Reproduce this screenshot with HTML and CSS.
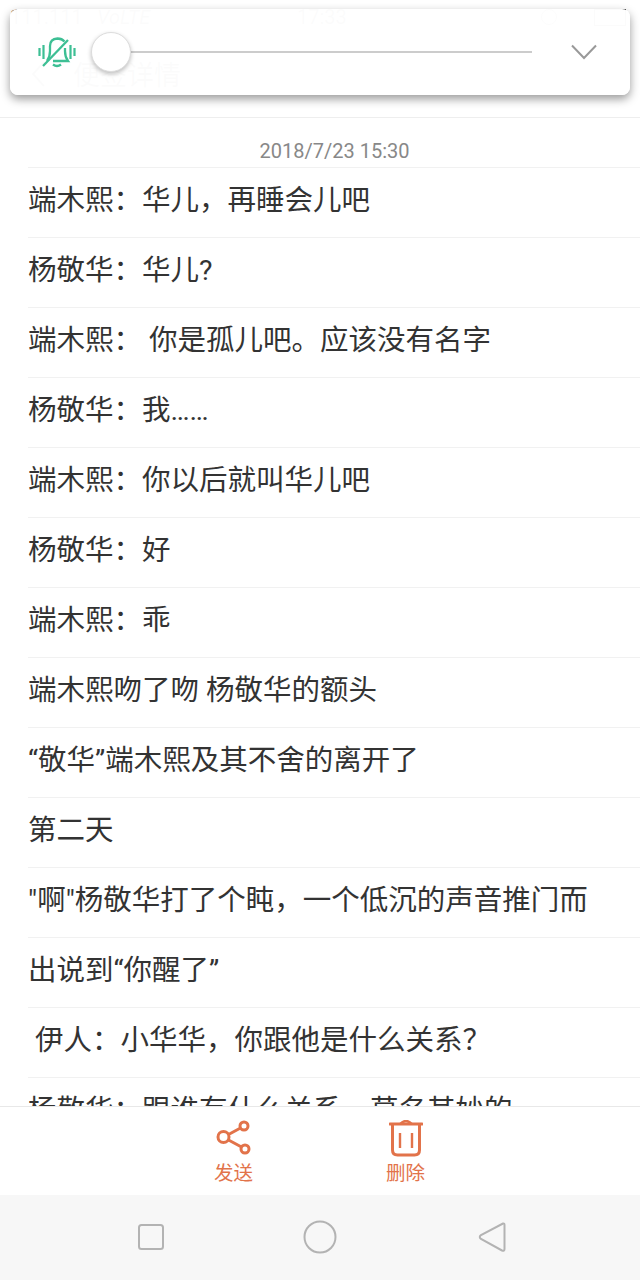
FILE: index.html
```html
<!DOCTYPE html>
<html>
<head>
  <meta charset="utf-8">
  <title>便签详情</title>
  <link rel="stylesheet" href="styles.css">
</head>
<body>
  <div class="page">
    <div class="statusbar">
      <span class="signal">111.111</span>
      <span class="net">VoLTE</span>
      <span class="clock">17:33</span>
      <span class="status-icon"></span>
      <span class="battery"></span>
    </div>
    <div class="titlebar">
      <svg class="back" width="16" height="28" viewBox="0 0 16 28"><path d="M14 2 L3 14 L14 26" fill="none" stroke="#333" stroke-width="2"/></svg>
      <span class="title">便签详情</span>
    </div>

    <div class="date">2018/7/23 15:30</div>
    <ul class="lines">
      <li>端木熙：华儿，再睡会儿吧</li>
      <li>杨敬华：华儿?</li>
      <li>端木熙：&nbsp;你是孤儿吧。应该没有名字</li>
      <li>杨敬华：我……</li>
      <li>端木熙：你以后就叫华儿吧</li>
      <li>杨敬华：好</li>
      <li>端木熙：乖</li>
      <li>端木熙吻了吻 杨敬华的额头</li>
      <li>“敬华”端木熙及其不舍的离开了</li>
      <li>第二天</li>
      <li>"啊"杨敬华打了个盹，一个低沉的声音推门而</li>
      <li>出说到“你醒了”</li>
      <li>&nbsp;伊人：小华华，你跟他是什么关系？</li>
      <li>杨敬华：跟谁有什么关系，莫名其妙的</li>
    </ul>

    <div class="actions">
      <div class="action">
        <svg width="38" height="38" viewBox="0 0 38 38" fill="none" stroke="#e2734a" stroke-width="3">
          <circle cx="8.500" cy="17" r="5.500"/>
          <circle cx="29" cy="6" r="4"/>
          <circle cx="30" cy="29" r="4"/>
          <path d="M13.500 14.500 L25.500 8 M13.500 20 L26.500 27"/>
        </svg>
        <span>发送</span>
      </div>
      <div class="action">
        <svg width="34" height="38" viewBox="0 0 34 38" fill="none" stroke="#e2734a" stroke-width="3">
          <path d="M1 4 H33" stroke-linecap="round"/>
          <path d="M11 4 Q17 -2 23 4" stroke-width="2.400"/>
          <path d="M3.500 5 V30 Q3.500 35 8.500 35 H25.500 Q30.500 35 30.500 30 V5"/>
          <path d="M11 13 V28 M23 13 V28" stroke-width="2.400"/>
        </svg>
        <span>删除</span>
      </div>
    </div>

    <div class="navbar">
      <svg width="28" height="28" viewBox="0 0 28 28"><rect x="2" y="2" width="24" height="24" rx="2.500" fill="none" stroke="#b3b3b3" stroke-width="2"/></svg>
      <svg width="34" height="34" viewBox="0 0 34 34"><circle cx="17" cy="17" r="15.500" fill="none" stroke="#b3b3b3" stroke-width="2"/></svg>
      <svg class="nav-back" width="28" height="32" viewBox="0 0 28 32"><path d="M25 2.500 Q26.500 2 26.500 4 V28 Q26.500 30.500 24 29.500 L3 18 Q0.500 16 3 14 Z" fill="none" stroke="#b3b3b3" stroke-width="2"/></svg>
    </div>

    <div class="volume">
      <svg class="bell" width="38" height="31" viewBox="0 0 38 31" fill="none" stroke="#3dbf94" stroke-width="2.300">
        <path d="M9 24 Q12 20 12 14 V9 Q12 2 19.500 1.500 Q24 1.500 26.500 4.500 M27 11 V14 Q27 20 30 24 H15"/>
        <path d="M15 27.500 Q19 30.500 23 27.500"/>
        <path d="M1.500 11 V19 M5.500 8 V22 M32.500 8 V22 M36.500 11 V19" stroke-width="2.200"/>
        <path d="M5 29 L30 3"/>
      </svg>
      <div class="slider">
        <div class="track"></div>
        <div class="knob"></div>
      </div>
      <svg class="chevron" width="26" height="16" viewBox="0 0 26 16"><path d="M1 1.500 L13 14 L25 1.500" fill="none" stroke="#999" stroke-width="2"/></svg>
    </div>
  </div>
</body>
</html>
```

FILE: styles.css
```css
* {
  box-sizing: border-box;
}
body {
  margin: 0;
  background: #fff;
  font-family: Roboto, "Noto Sans CJK SC", sans-serif;
}
.page {
  position: relative;
  width: 640px;
  height: 1280px;
  display: flex;
  flex-direction: column;
  overflow: hidden;
}
.statusbar {
  height: 36px;
  padding: 0 12px 2px 10px;
  display: flex;
  align-items: center;
  font-size: 20px;
  color: #333;
}
.signal {
  width: 87px;
}
.net {
  width: 200px;
  font-style: italic;
}
.clock {
  width: 244px;
}
.status-icon {
  width: 16px;
  height: 16px;
  margin-right: 37px;
  border: 1px solid #333;
  border-radius: 50%;
}
.battery {
  width: 32px;
  height: 17px;
  border: 1px solid #333;
}
.titlebar {
  height: 82px;
  padding: 0 0 6px 30px;
  display: flex;
  align-items: center;
  gap: 27px;
  border-bottom: 1px solid #eee;
}
.title {
  font-size: 27px;
  color: #333;
}
.date {
  height: 49px;
  padding: 19px 0 0 29px;
  text-align: center;
  font-size: 20px;
  line-height: 28px;
  color: #888;
}
.lines {
  flex: 1;
  min-height: 0;
  margin: 0;
  padding: 0 0 0 28px;
  list-style: none;
  overflow: hidden;
}
.lines li {
  height: 70px;
  border-top: 1px solid #f1f1f1;
  font-size: 28.500px;
  line-height: 66px;
  color: #333;
  white-space: nowrap;
}
.actions {
  height: 89px;
  flex-shrink: 0;
  padding: 13px 0 0 214px;
  display: flex;
  gap: 133px;
  background: #fff;
  border-top: 1px solid #e8e8e8;
}
.action {
  width: 39px;
  display: flex;
  flex-direction: column;
  align-items: center;
  font-size: 19.500px;
  line-height: 32px;
  color: #e2734a;
}
.navbar {
  height: 85px;
  flex-shrink: 0;
  padding: 0 0 2px 137px;
  display: flex;
  align-items: center;
  gap: 138px;
  background: #f7f7f7;
}
.nav-back {
  margin-left: 3px;
}
.volume {
  position: absolute;
  top: 9px;
  left: 10px;
  width: 620px;
  height: 86px;
  padding: 0 33px 0 28px;
  display: flex;
  align-items: center;
  background: rgba(255, 255, 255, 0.985);
  border-radius: 8px;
  box-shadow: 0 4px 10px rgba(0, 0, 0, 0.4);
}
.slider {
  position: relative;
  width: 441px;
  height: 40px;
  margin: 0 39px 0 15px;
  display: flex;
  align-items: center;
}
.track {
  width: 100%;
  height: 2px;
  background: #ccc;
}
.knob {
  position: absolute;
  left: 0;
  top: 0;
  width: 40px;
  height: 40px;
  background: #fff;
  border: 1px solid #ddd;
  border-radius: 50%;
  box-shadow: 0 2px 4px rgba(0, 0, 0, 0.25);
}
```
